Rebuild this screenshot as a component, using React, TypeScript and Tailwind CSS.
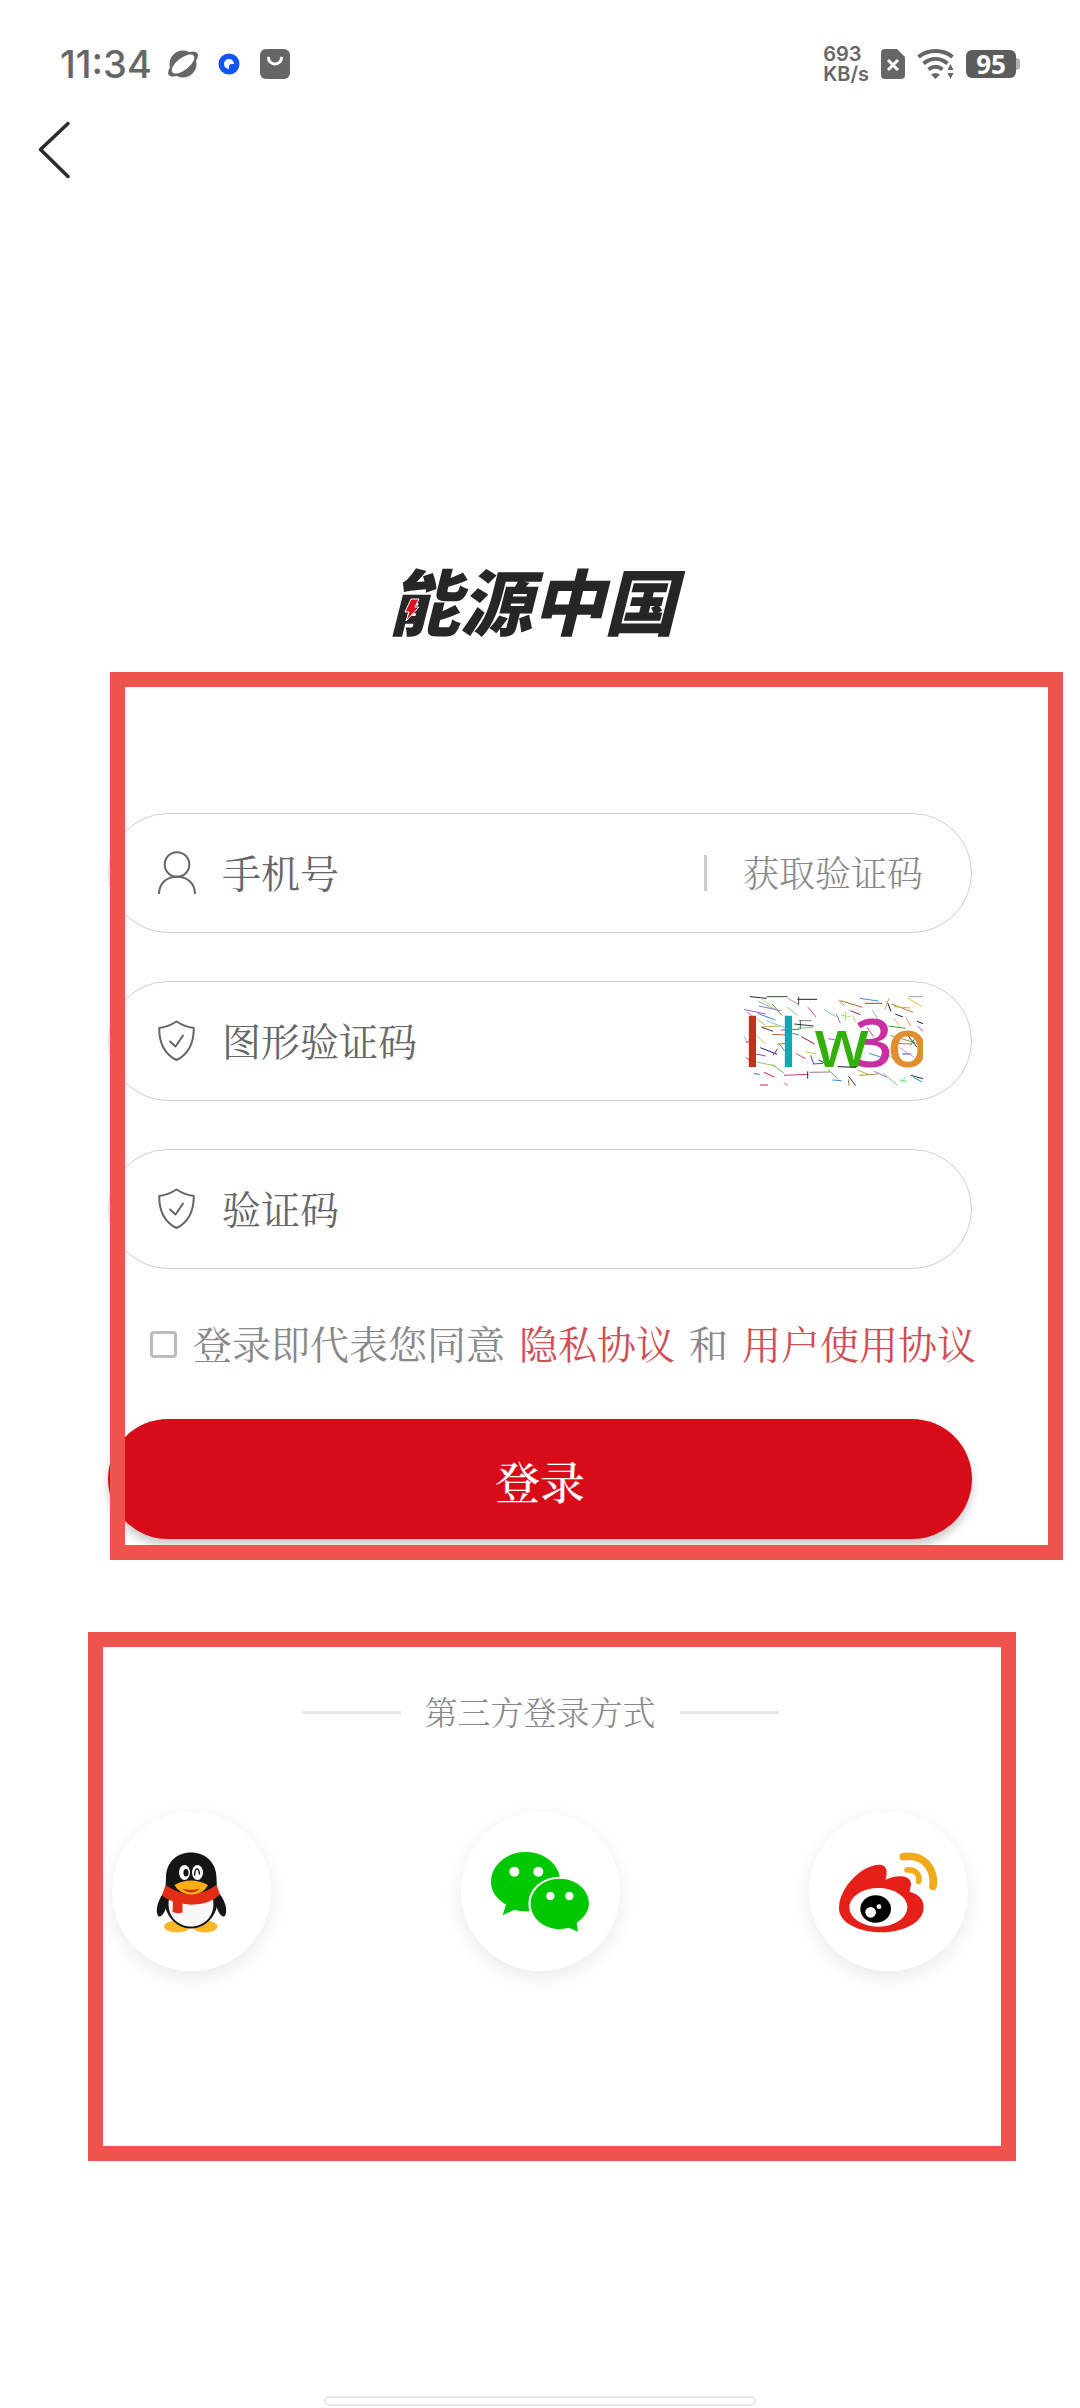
import { useState } from "react";
import type { ReactNode } from "react";

/**
 * Noise strokes drawn behind the captcha letters: x1, y1, x2, y2, colour
 */
const NOISE: [number, number, number, number, string][] = [
  [333, 650, 383, 655, "#1d2350"],
  [383, 650, 446, 650, "#2f5a2a"],
  [475, 658, 534, 658, "#222222"],
  [479, 650, 479, 676, "#3a4a4a"],
  [446, 655, 478, 672, "#d98aa8"],
  [357, 664, 412, 690, "#6fd08a"],
  [365, 655, 404, 682, "#d7d27a"],
  [360, 678, 425, 692, "#9a6fd8"],
  [400, 672, 428, 706, "#5d9a3a"],
  [445, 682, 476, 706, "#7ad07f"],
  [507, 682, 531, 711, "#c2459a"],
  [313, 688, 380, 702, "#a55fd0"],
  [356, 700, 409, 720, "#2f8fc4"],
  [325, 696, 345, 712, "#d46a8a"],
  [480, 722, 517, 722, "#7a7a7a"],
  [484, 722, 484, 748, "#555555"],
  [466, 732, 524, 738, "#333333"],
  [365, 741, 428, 738, "#c9b04a"],
  [369, 742, 402, 754, "#4a2f6a"],
  [382, 722, 440, 744, "#7fd0b0"],
  [345, 710, 378, 735, "#b0d060"],
  [425, 750, 480, 748, "#b04ad0"],
  [398, 763, 440, 765, "#c06a3a"],
  [476, 745, 520, 742, "#5fd06f"],
  [487, 770, 527, 792, "#8a1f3a"],
  [460, 760, 480, 765, "#2fa06f"],
  [314, 768, 328, 790, "#8fd0b0"],
  [320, 786, 352, 784, "#c44a9a"],
  [350, 765, 380, 792, "#d8c86a"],
  [364, 803, 414, 823, "#2a1f7a"],
  [402, 826, 416, 806, "#5a2f9a"],
  [420, 790, 436, 812, "#2f9a8a"],
  [413, 793, 440, 790, "#d08a3a"],
  [350, 822, 380, 828, "#a03ad0"],
  [320, 832, 340, 846, "#b04a4a"],
  [352, 846, 410, 858, "#9ad06a"],
  [470, 820, 500, 836, "#d05a5a"],
  [500, 815, 532, 822, "#c9c05a"],
  [515, 826, 524, 852, "#4a4ad0"],
  [522, 852, 552, 850, "#5a3ac0"],
  [538, 840, 580, 858, "#1f4a4a"],
  [398, 853, 436, 880, "#6fbf5a"],
  [375, 877, 406, 891, "#d0205f"],
  [344, 881, 362, 883, "#2f7a9a"],
  [435, 886, 508, 883, "#c0407a"],
  [506, 874, 506, 896, "#333333"],
  [512, 877, 573, 876, "#a070a0"],
  [363, 915, 387, 915, "#b02f5a"],
  [436, 908, 445, 917, "#c02f5a"],
  [555, 688, 590, 710, "#7ad08a"],
  [592, 702, 604, 730, "#a06fd8"],
  [598, 660, 616, 676, "#c98a3a"],
  [605, 662, 670, 682, "#a0702f"],
  [619, 694, 619, 722, "#a0e070"],
  [606, 706, 634, 710, "#a0e070"],
  [634, 692, 664, 704, "#9a2f4a"],
  [662, 655, 718, 663, "#2f9ac0"],
  [678, 670, 729, 670, "#a04a2f"],
  [744, 664, 756, 694, "#1f1f3a"],
  [750, 655, 738, 688, "#d0a04a"],
  [758, 672, 822, 697, "#c07a2f"],
  [765, 680, 815, 684, "#c9b83a"],
  [808, 650, 852, 650, "#b0a08a"],
  [806, 654, 848, 680, "#e0c04a"],
  [768, 702, 792, 711, "#2a2f6a"],
  [834, 724, 852, 731, "#1f1f3a"],
  [836, 738, 852, 754, "#b04ad0"],
  [765, 714, 785, 745, "#d0d05a"],
  [800, 712, 815, 738, "#e09a5a"],
  [700, 690, 716, 716, "#6fd0a0"],
  [684, 742, 704, 770, "#c04a9a"],
  [748, 738, 800, 745, "#4a9a4a"],
  [640, 706, 652, 728, "#e0d05a"],
  [568, 776, 590, 780, "#b04ad0"],
  [754, 766, 840, 792, "#7a9a3a"],
  [764, 790, 816, 792, "#c07a5a"],
  [808, 768, 834, 802, "#3a3a3a"],
  [815, 796, 830, 770, "#3a7a4a"],
  [790, 822, 817, 822, "#3a4ac0"],
  [780, 802, 826, 832, "#d09ad0"],
  [744, 820, 774, 846, "#7ad05a"],
  [690, 820, 728, 832, "#3a9ac0"],
  [655, 840, 690, 856, "#c07ad0"],
  [566, 868, 598, 898, "#5fb04a"],
  [580, 900, 608, 902, "#3a8ad0"],
  [628, 888, 650, 917, "#3a2f5a"],
  [628, 898, 630, 917, "#a07a3a"],
  [655, 870, 690, 884, "#c9b03a"],
  [660, 886, 718, 882, "#a09a3a"],
  [706, 874, 744, 892, "#c06ad0"],
  [732, 880, 776, 916, "#7ad08a"],
  [782, 900, 804, 904, "#6fe05a"],
  [788, 908, 800, 890, "#6fe0a0"],
  [816, 886, 852, 896, "#2f2f5a"],
  [822, 892, 850, 906, "#2f9ac0"],
];

function StatusBar() {
  return (
    <header className="flex h-32 items-center justify-between px-[60px] font-['Inter',sans-serif] text-[#666]">
      <div className="flex items-center">
        <span className="text-[38px] leading-10 font-medium">11:34</span>
        <svg className="ml-4 h-[30px] w-[30px]" viewBox="0 0 30 30" aria-hidden="true">
          <circle cx="15" cy="15" r="13.500" fill="#666" />
          <ellipse cx="15" cy="15" rx="18" ry="7.500" transform="rotate(-38 15 15)" fill="#666" />
          <ellipse cx="15" cy="15" rx="13.500" ry="6" transform="rotate(-38 15 15)" fill="#fefefe" />
        </svg>
        <svg className="ml-5 h-[22px] w-[22px]" viewBox="0 0 22 22" aria-hidden="true">
          <circle cx="11" cy="11" r="10.500" fill="#1254f5" />
          <path d="M11 16a5 5 0 1 1 5-5h-2.500a2.500 2.500 0 0 0-2.500 2.500z" fill="#fff" />
        </svg>
        <svg className="ml-5 h-[30px] w-[30px]" viewBox="0 0 30 30" aria-hidden="true">
          <rect width="30" height="30" rx="6" fill="#666" />
          <path d="M8.500 9a6.500 6 0 0 0 13 0" fill="none" stroke="#fff" strokeWidth="3" strokeLinecap="round" />
        </svg>
      </div>
      <div className="flex items-center gap-3">
        <div className="text-xl leading-5 font-semibold">
          <p>693</p>
          <p>KB/s</p>
        </div>
        <svg className="h-[30px] w-6" viewBox="0 0 24 30" aria-hidden="true">
          <path d="M4 0h12l8 8v18a4 4 0 0 1-4 4H4a4 4 0 0 1-4-4V4a4 4 0 0 1 4-4z" fill="#666" />
          <path d="M7 11l10 10M17 11L7 21" stroke="#fff" strokeWidth="3" />
        </svg>
        <svg className="h-[30px] w-[37px]" viewBox="0 0 37 30" aria-hidden="true">
          <g fill="none" stroke="#666" strokeWidth="4">
            <path d="M1.500 8C11 0 26 0 35.500 8" />
            <path d="M6.500 14.500C14 8.500 23 8.500 30.500 14.500" />
            <path d="M11.500 20.500C16 17 21 17 25.500 20.500" />
          </g>
          <path d="M14 25.500q4.500-3 9 0L18.500 30z" fill="#666" />
          <path d="M30.500 21h6l-3-6zM30.500 24h6l-3 6z" fill="#666" />
        </svg>
        <div className="flex items-center">
          <span className="flex h-7 w-[50px] items-center justify-center rounded-md bg-[#5c5c5c] font-['Noto_Sans',sans-serif] text-[26px] leading-7 font-bold text-white">
            95
          </span>
          <span className="h-3 w-1 rounded-r-sm bg-[#b0b0b0]" />
        </div>
      </div>
    </header>
  );
}

function UserIcon() {
  return (
    <svg className="h-11 w-[38px] shrink-0" viewBox="0 0 38 44" fill="none" stroke="#666" strokeWidth="2" aria-hidden="true">
      <circle cx="19" cy="13.500" r="12.300" />
      <path d="M1 43C1 32 9 25.800 19 25.800S37 32 37 43" />
    </svg>
  );
}

function ShieldIcon() {
  return (
    <svg className="h-11 w-[38px] shrink-0" viewBox="0 0 38 44" fill="none" stroke="#666" strokeWidth="2" strokeLinecap="round" strokeLinejoin="round" aria-hidden="true">
      <path d="M18.500 2.500C13 6 7 8.300 1.200 9C1.200 24 7 35.500 18.500 41C30 35.500 35.800 24 35.800 9C30 8.300 24 6 18.500 2.500z" />
      <path d="M12 22.500l5.500 5 7.500-11" />
    </svg>
  );
}

function Captcha() {
  return (
    <svg className="h-[92px] w-[179px]" viewBox="315 645 537 276" role="img" aria-label="图形验证码">
      {NOISE.map(([x1, y1, x2, y2, color], i) => (
        <line key={i} x1={x1} y1={y1} x2={x2} y2={y2} stroke={color} strokeWidth="3" />
      ))}
      <g fontFamily="Noto Sans, sans-serif" fontSize="204" fontWeight="500">
        <text x="313" y="860" fill="#c23020">l</text>
        <text x="421" y="860" fill="#14a8b4">l</text>
        <text x="645" y="860" fill="#c92fa0">3</text>
        <text x="526" y="862" fill="#32b00a">w</text>
        <text x="744" y="860" fill="#e08f30">o</text>
      </g>
      <path d="M596 860L652 862" stroke="#1a1a1a" strokeWidth="3" />
    </svg>
  );
}

function Field({ id, label, icon, children }: { id: string; label: string; icon: ReactNode; children?: ReactNode }) {
  return (
    <div className="flex h-30 items-center rounded-full border border-[#d0d0d0] pr-12 pl-[49px]">
      <label htmlFor={id} aria-label={label}>
        {icon}
      </label>
      <input
        id={id}
        type="text"
        placeholder={label}
        className="ml-[26px] h-full min-w-0 flex-1 bg-transparent pb-1 text-[39px] text-[#666] outline-none placeholder:text-[#666]"
      />
      {children}
    </div>
  );
}

function QQIcon() {
  return (
    <svg className="h-[82px] w-[71px]" viewBox="0 0 71 82" aria-hidden="true">
      <ellipse cx="21" cy="75.500" rx="13" ry="6" fill="#fbb62a" />
      <ellipse cx="49" cy="75.500" rx="12.500" ry="6" fill="#fbb62a" />
      <path d="M9 40C3 47 0 56 1 62q1 5 4 3q3-2 5-8zM61 40C68 47 71 56 70 62q-1 5-4 3q-3-2-5-8z" fill="#151515" />
      <path d="M35 1.500C49 1.500 60.500 11 60.500 27L61 38C66 60 52 77.500 35 77.500S4 60 9.500 38L10 27C10 11 21 1.500 35 1.500z" fill="#151515" />
      <path d="M13 48Q35 58 57 48C60 65 48 75.500 35 75.500S10 65 13 48z" fill="#f8f8f8" />
      <path d="M9.500 34Q35 52 60.500 34L64 43.500Q54 53 38 53.500Q33 54 26.500 52.500L26.500 61.500Q21 63 16.500 61L17 50.500Q10 48 6 44.500z" fill="#e32d15" />
      <ellipse cx="28.500" cy="21.500" rx="5.500" ry="7.500" fill="#fff" />
      <ellipse cx="41.500" cy="21.500" rx="5.500" ry="7.500" fill="#fff" />
      <ellipse cx="30" cy="21.800" rx="2.600" ry="3.800" fill="#151515" />
      <path d="M38.500 24q.5-6 2.500-6t2.500 5" fill="none" stroke="#151515" strokeWidth="1.500" strokeLinecap="round" />
      <path d="M18.500 34Q26 29.500 35 29.500T52 34Q48 43 35.500 43.500Q23 43 18.500 34z" fill="#fbae17" />
      <path d="M26 37.500Q35 40 44 37.500Q40 41.500 35 41.500T26 37.500z" fill="#c4380c" />
    </svg>
  );
}

function WechatIcon() {
  return (
    <svg className="h-[82px] w-[100px]" viewBox="90 150 300 246" fill="#00c800" aria-hidden="true">
      <path d="M197 153C255 153 301 192 301 242S255 331 197 331Q178 331 164 326L128 343L138 311C110 294 93 270 93 242C93 192 140 153 197 153z" />
      <ellipse cx="299" cy="308" rx="94" ry="81" fill="#fff" />
      <path d="M299 233C348 233 387 266 387 308Q387 338 350 366L354 392L326 380Q312 384 299 384C250 384 212 350 212 308S250 233 299 233z" />
      <g fill="#fff">
        <circle cx="163" cy="212" r="15" />
        <circle cx="235" cy="212" r="15" />
        <circle cx="271" cy="285" r="12.500" />
        <circle cx="328" cy="285" r="12.500" />
      </g>
    </svg>
  );
}

function WeiboIcon() {
  return (
    <svg className="h-[82px] w-[100px]" viewBox="417 690 300 246" aria-hidden="true">
      <path
        d="M417 862C417 800 485 732 537 731C562 731 563 752 557 776C592 760 633 762 633 790L629 812C652 818 671 832 671 858C671 905 610 934 543 934C475 934 417 905 417 862z"
        fill="#e61f19"
      />
      <ellipse cx="535" cy="859" rx="87" ry="58" fill="#fff" />
      <ellipse cx="527" cy="864" rx="46" ry="41" />
      <circle cx="512" cy="874" r="16" fill="#fff" />
      <circle cx="537" cy="857" r="7" fill="#fff" />
      <g fill="none" stroke="#f0aa1a" strokeLinecap="round">
        <path d="M610 707C668 698 706 740 699 796" strokeWidth="23" />
        <path d="M621 747C645 744 661 760 656 781" strokeWidth="17" />
      </g>
    </svg>
  );
}

const PROVIDERS = [
  { name: "QQ", icon: <QQIcon /> },
  { name: "微信", icon: <WechatIcon /> },
  { name: "微博", icon: <WeiboIcon /> },
];

export default function App() {
  const [agreed, setAgreed] = useState(false);

  return (
    <div className="flex min-h-screen flex-col bg-[#fefefe] font-['Noto_Serif_CJK_SC','Noto_Sans_CJK_SC',serif]">
      <StatusBar />

      <nav className="flex h-11 items-center pl-9">
        <button type="button" aria-label="返回">
          <svg className="h-[60px] w-9" viewBox="0 0 36 60" fill="none" stroke="#2b2b2b" strokeWidth="3.500" strokeLinecap="round" strokeLinejoin="round">
            <path d="M32 3.500L4.500 29.500L32 56.500" />
          </svg>
        </button>
      </nav>

      {/* Logo */}
      <div className="mt-[382px] flex justify-center pr-4">
        <h1 className="relative font-['Noto_Sans_CJK_SC',sans-serif] text-[72px] leading-[90px] font-black text-[#262626] italic">
          能源中国
          <svg className="absolute top-11 left-4 h-6 w-4" viewBox="0 0 16 24" aria-hidden="true">
            <path d="M7 1H15L11 9H15L2 23L5 14H1z" fill="#d81020" stroke="#fefefe" />
          </svg>
        </h1>
      </div>

      {/* Login form */}
      <section className="relative mt-7 px-[10%] pt-[141px] pb-[21px]">
        <form onSubmit={(e) => e.preventDefault()}>
          <div className="flex flex-col gap-12">
            <Field id="phone" label="手机号" icon={<UserIcon />}>
              <span className="mr-9 h-9 w-[3px] bg-[#ccc]" />
              <button type="button" className="pb-0.5 text-4xl font-light text-[#888]">
                获取验证码
              </button>
            </Field>
            <Field id="captcha" label="图形验证码" icon={<ShieldIcon />}>
              <button type="button" aria-label="刷新图形验证码">
                <Captcha />
              </button>
            </Field>
            <Field id="code" label="验证码" icon={<ShieldIcon />} />
          </div>

          <div className="flex h-[150px] items-center gap-4 pl-[42px] text-[39px] whitespace-nowrap text-[#888]">
            <input
              id="agree"
              type="checkbox"
              checked={agreed}
              onChange={(e) => setAgreed(e.target.checked)}
              className="h-[27px] w-[27px] shrink-0 appearance-none rounded-sm border-3 border-[#bbb] checked:bg-[#d80c18]"
            />
            <div className="flex gap-3.5 pb-1">
              <label htmlFor="agree">登录即代表您同意</label>
              <a href="#privacy" className="text-[#cd5055]">
                隐私协议
              </a>
              <span>和</span>
              <a href="#terms" className="text-[#cd5055]">
                用户使用协议
              </a>
            </div>
          </div>

          <button type="submit" className="h-30 w-full rounded-full bg-[#d80c18] pt-1 text-[45px] font-medium text-white shadow-[0_6px_9px_rgba(0,0,0,0.2)]">
            登录
          </button>
        </form>
        <div className="pointer-events-none absolute inset-y-0 right-[17px] left-[110px] border-15 border-[#f0524c]" />
      </section>

      {/* Third-party login */}
      <section className="relative mt-[72px] px-[10%] pt-[60px] pb-[190px]">
        <div className="flex h-10 items-center justify-center gap-6 text-[33px] text-[#888]">
          <span className="h-[3px] w-[99px] bg-[#e8e8e8]" />
          <h2 className="pb-0.5 font-light">第三方登录方式</h2>
          <span className="h-[3px] w-[99px] bg-[#e8e8e8]" />
        </div>
        <div className="mt-20 flex justify-between px-1">
          {PROVIDERS.map(({ name, icon }) => (
            <button
              key={name}
              type="button"
              aria-label={name}
              className="flex h-[159px] w-[159px] items-center justify-center rounded-full bg-white shadow-[0_6px_18px_rgba(0,0,0,0.08)]"
            >
              {icon}
            </button>
          ))}
        </div>
        <div className="pointer-events-none absolute inset-y-0 right-16 left-[88px] border-15 border-[#f0524c]" />
      </section>

      <div className="mx-auto mt-auto mb-0.5 h-2.5 w-2/5 rounded-full border-2 border-[#e8e8e8] bg-white" />
    </div>
  );
}
